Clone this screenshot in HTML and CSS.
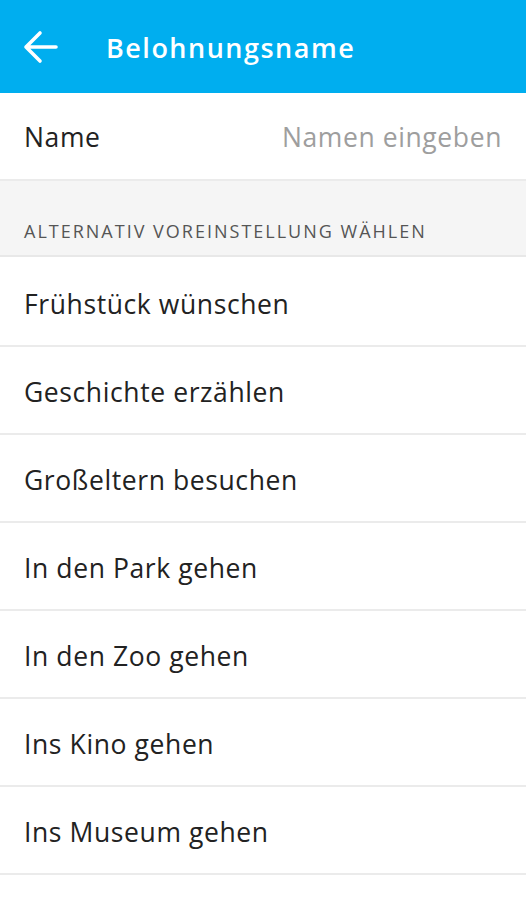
FILE: index.html
```html
<!DOCTYPE html>
<html lang="de">
<head>
<meta charset="utf-8">
<link rel="stylesheet" href="styles.css">
</head>
<body>
<header class="appbar">
  <svg class="back" width="36" height="36" viewBox="0 0 36 36" aria-hidden="true">
    <path d="M33 18H3M17 4L3 18l14 14" fill="none" stroke="#fff" stroke-width="3.6" stroke-linecap="round" stroke-linejoin="round"/>
  </svg>
  <h1 class="title">Belohnungsname</h1>
</header>
<div class="name-row">
  <span class="label">Name</span>
  <span class="placeholder">Namen eingeben</span>
</div>
<div class="section">ALTERNATIV VOREINSTELLUNG WÄHLEN</div>
<ul class="list">
  <li>Frühstück wünschen</li>
  <li>Geschichte erzählen</li>
  <li>Großeltern besuchen</li>
  <li>In den Park gehen</li>
  <li>In den Zoo gehen</li>
  <li>Ins Kino gehen</li>
  <li>Ins Museum gehen</li>
</ul>
</body>
</html>
```
FILE: styles.css
```css
* { box-sizing: border-box; }
body {
  margin: 0;
  font-family: "Open Sans", "Noto Sans", sans-serif;
  background: #fff;
  color: #222;
}
.appbar {
  height: 93px;
  background: #00aeef;
  display: flex;
  align-items: center;
  padding: 2px 0 0 23px;
  gap: 47px;
}
.back { display: block; margin-top: -2px; }
.title {
  margin: 0;
  color: #fff;
  font-size: 27px;
  font-weight: 600;
  letter-spacing: 1.5px;
}
.name-row {
  height: 88px;
  display: flex;
  align-items: center;
  justify-content: space-between;
  padding: 2px 24px 0;
  border-bottom: 2px solid #ebebeb;
  font-size: 26.5px;
  letter-spacing: 0.6px;
}
.placeholder { color: #9e9e9e; }
.section {
  height: 76px;
  background: #f5f5f5;
  border-bottom: 2px solid #e8e8e8;
  padding: 0 24px 12px;
  display: flex;
  align-items: flex-end;
  font-size: 18px;
  letter-spacing: 2px;
  color: #555;
}
.list {
  list-style: none;
  margin: 2px 0 0;
  padding: 0;
}
.list li {
  height: 88px;
  display: flex;
  align-items: center;
  padding: 3px 24px 0;
  border-bottom: 2px solid #ebebeb;
  font-size: 26.5px;
  letter-spacing: 0.6px;
}
```
